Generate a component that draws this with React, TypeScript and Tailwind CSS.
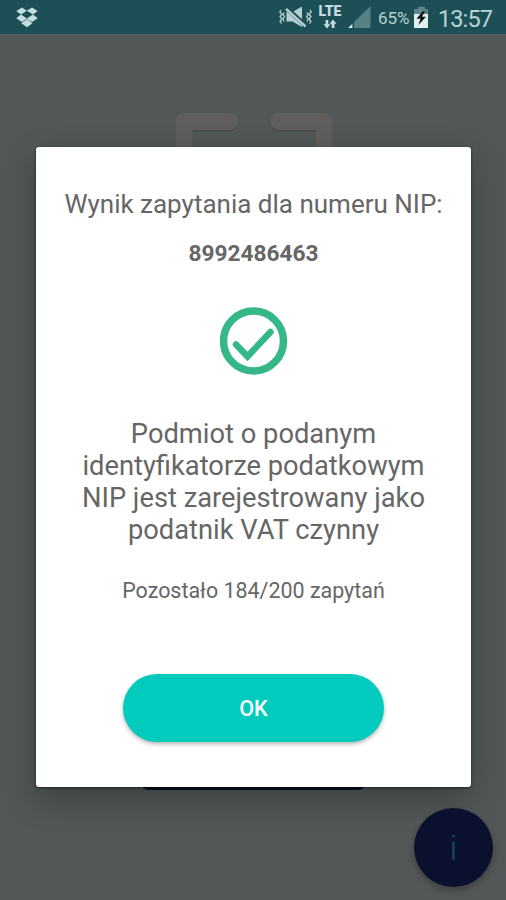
function DropboxIcon() {
  return (
    <svg className="ml-4 h-[21px] w-[22px]" viewBox="0 0 22 21" fill="#c3dde0">
      <path d="M6 0.5 10.8 3.8 5 7.6 0.3 4Z M16 0.5 21.7 4 17 7.6 10.8 3.8Z M5 7.4 10.8 11.4 6 15 0.3 11.3Z M17 7.4 21.7 11.3 16 15 10.8 11.4Z M11 12 16.5 16.2 11 20.3 5.3 16.2Z" />
    </svg>
  );
}

function VibrateMuteIcon() {
  return (
    <svg className="h-[22px] w-[34px]" viewBox="0 0 34 22" fill="none">
      <path d="M7.5 6h6l9.5-5.5v20.5l-9.5-5.5h-6z" fill="#b5cfd2" />
      <path d="M7 1.5 27 20" stroke="#1d5056" strokeWidth="4.6" />
      <path d="M7 2.8 26.5 20.5" stroke="#b5cfd2" strokeWidth="2.4" />
      <path d="m2 4-1.2 2L3 8.2 1 10.5 3 13 1 15.2 2.5 17.5M5 6.5 4 8.5l1.5 2L4 13l1 2.5M28 6.5l1.2 2-1.5 2 1.5 2.5-1.2 2.5M31 4l1.2 2L30 8.2l2 2.3-2 2.5 2 2.2-1.5 2.3" stroke="#b5cfd2" strokeWidth="1.3" />
    </svg>
  );
}

function LteIcon() {
  return (
    <div className="flex w-[24px] flex-col items-center text-[#c3dde0]">
      <span className="text-[14px] font-black leading-[13px]">LTE</span>
      <svg className="mt-px h-[10px] w-[14px]" viewBox="0 0 14 10" fill="#c3dde0">
        <path d="M2.6 1h2.7v4.2h2.1L4 9.6.5 5.2h2.1z M8.7 9h2.7V4.8h2.1L10 .4 6.6 4.8h2.1z" />
      </svg>
    </div>
  );
}

function SignalIcon() {
  return (
    <svg className="h-[23px] w-[24px]" viewBox="0 0 24 23">
      <path d="M22.5 0v22H6v-6z" fill="#568187" />
      <path d="M4.4 17.7V22H0z" fill="#d3e6e8" />
    </svg>
  );
}

function BatteryIcon() {
  return (
    <svg className="h-[23px] w-[16px]" viewBox="0 0 16 23">
      <path d="M4 3V.7h7V3h3v6H0V3z" fill="#5d8488" />
      <path d="M0 8h14v14H0z" fill="#e3eeef" />
      <path d="M9 5 2.5 12.7h4L4.5 19 12 10.8H8.1L11 5z" fill="#0c1719" />
    </svg>
  );
}

function StatusBar() {
  return (
    <header className="flex h-[34px] items-center bg-[#1d5056]">
      <DropboxIcon />
      <div className="ml-auto flex items-center text-[#b9d2d5]">
        <VibrateMuteIcon />
        <div className="ml-[5px]"><LteIcon /></div>
        <div className="ml-[6px]"><SignalIcon /></div>
        <span className="ml-[6px] w-[34px] whitespace-nowrap pt-[3px] text-[17px] tracking-[-0.1px]">65%</span>
        <div className="ml-[2px]"><BatteryIcon /></div>
        <span className="ml-[8px] mr-[14px] w-[54px] whitespace-nowrap pt-[3px] text-[23.5px] leading-7 tracking-[-0.9px]">13:57</span>
      </div>
    </header>
  );
}

function ScannerFrame() {
  return (
    <svg className="absolute left-[170px] top-[108px] h-[60px] w-[168px]" viewBox="0 0 168 60" fill="none">
      <g stroke="#454c4c" strokeWidth="17" strokeLinecap="round" strokeLinejoin="round">
        <path d="M14 60V15H60M154 60V15H109" />
      </g>
      <g stroke="#5f5e5c" strokeWidth="17" strokeLinecap="round" strokeLinejoin="round">
        <path d="M14 60V13.5H60M154 60V13.5H109" />
      </g>
    </svg>
  );
}

function ResultDialog() {
  return (
    <section className="relative mx-auto mt-[113px] flex h-[640px] w-[435px] flex-col items-center rounded-[3px] bg-white text-center text-[#666666] shadow-[0_1px_3px_rgba(0,0,0,0.55),0_12px_32px_rgba(0,0,0,0.27)]">
      <h1 className="mt-[41px] whitespace-nowrap text-[26px] leading-8">Wynik zapytania dla numeru NIP:</h1>
      <p className="mt-[20px] text-[22.7px] font-bold leading-7">8992486463</p>
      <svg className="mt-[39px] h-[68px] w-[68px]" viewBox="0 0 68 68" fill="none" stroke="#35b787">
        <circle cx="33.5" cy="34" r="30" strokeWidth="7.5" />
        <path d="m16 37.5 11.5 12L50.5 25" strokeWidth="6.5" strokeLinecap="round" />
      </svg>
      <p className="mt-[43px] whitespace-nowrap text-[27.3px] leading-[32px]">
        Podmiot o podanym<br />identyfikatorze podatkowym<br />NIP jest zarejestrowany jako<br />podatnik VAT czynny
      </p>
      <p className="mt-[31px] whitespace-nowrap text-[21.45px] leading-7">Pozostało 184/200 zapytań</p>
      <button className="mt-[69px] h-[68px] w-[261px] rounded-full bg-[#02cbbe] pt-[2px] text-[21.5px] font-medium text-white shadow-[0_2px_4px_rgba(0,0,0,0.3)]">OK</button>
    </section>
  );
}

export default function App() {
  return (
    <main className="relative h-[900px] w-[506px] overflow-hidden bg-[#525857] font-['Roboto',sans-serif]">
      <StatusBar />
      <ScannerFrame />
      <div className="absolute left-[141px] top-[770px] h-[20px] w-[225px] rounded-b-[8px] bg-[#080e20]" />
      <div className="pl-[1px]">
        <ResultDialog />
      </div>
      <button className="absolute left-[414px] top-[808px] flex h-[79px] w-[79px] items-center justify-center rounded-full bg-[#0a102d] shadow-[0_3px_7px_rgba(0,0,0,0.3)]">
        <svg className="h-[27px] w-[5px]" viewBox="0 0 5 27" fill="#15475a">
          <path d="M1.2 1h2.5v2.5H1.2zM1.2 8h2.5v18H1.2z" />
        </svg>
      </button>
    </main>
  );
}
